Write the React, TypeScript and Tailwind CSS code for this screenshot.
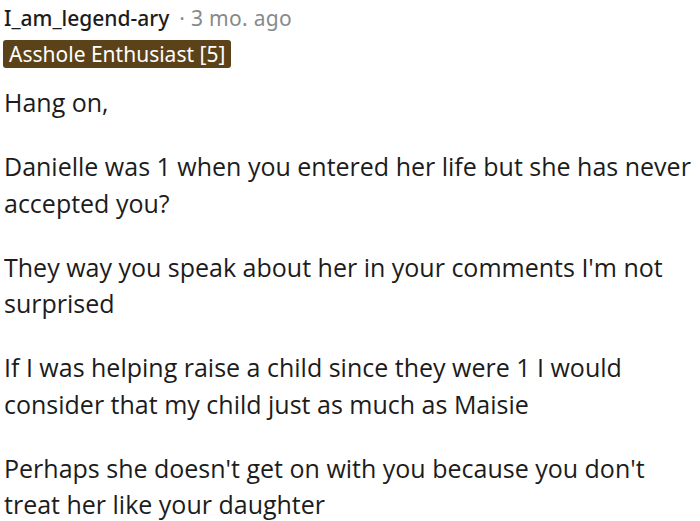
const paragraphs = [
  "Hang on,",
  "Danielle was 1 when you entered her life but she has never accepted you?",
  "They way you speak about her in your comments I'm not surprised",
  "If I was helping raise a child since they were 1 I would consider that my child just as much as Maisie",
  "Perhaps she doesn't get on with you because you don't treat her like your daughter",
]

export default function App() {
  return (
    <div className="w-[700px] h-[521px] bg-white overflow-hidden pl-[4px] pt-[2px]">
      <div className="flex items-center gap-[10px] text-[21px] leading-[32px] font-['Noto_Sans',sans-serif]">
        <span className="font-medium text-[#1c1c1c]">I_am_legend-ary</span>
        <span className="text-[#878a8c] tracking-[0.3px]">· 3 mo. ago</span>
      </div>
      <div className="mt-[6px] -ml-[1px] inline-block rounded-[3px] bg-[#5b4219] px-[6px] text-[21px] leading-[28px] text-white font-['Noto_Sans',sans-serif]">
        Asshole Enthusiast [5]
      </div>
      <div className="mt-[16px] flex flex-col gap-[27.5px] font-['Open_Sans',sans-serif] text-[25px] leading-[36.5px] text-[#1c1c1c]">
        {paragraphs.map((p) => (
          <p key={p}>{p}</p>
        ))}
      </div>
    </div>
  )
}
